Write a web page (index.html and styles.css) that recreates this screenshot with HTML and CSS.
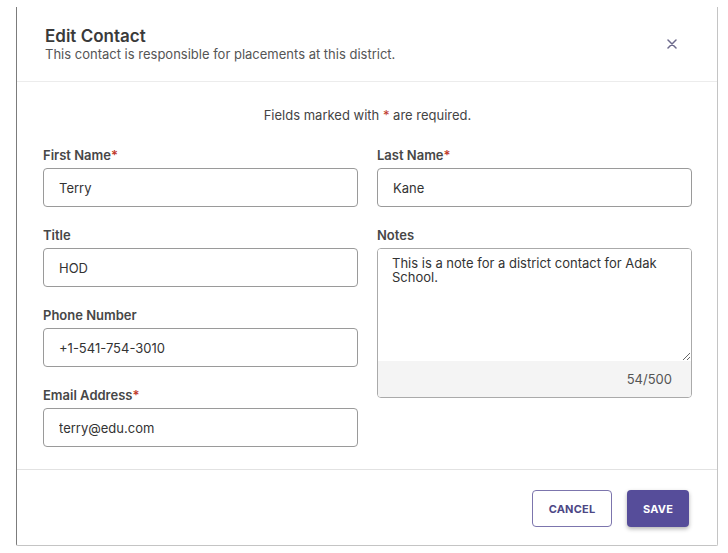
FILE: index.html
```html
<!DOCTYPE html>
<html lang="en">
<head>
<meta charset="utf-8">
<title>Edit Contact</title>
<link rel="stylesheet" href="styles.css">
</head>
<body>
<div class="modal">
  <header class="modal-header">
    <div class="titles">
      <h1 class="title">Edit Contact</h1>
      <p class="subtitle">This contact is responsible for placements at this district.</p>
    </div>
    <button class="close" aria-label="Close">
      <svg width="10" height="10" viewBox="0 0 10 10"><path d="M1 1L9 9M9 1L1 9" stroke="#6d6a8c" stroke-width="1.5" stroke-linecap="round"/></svg>
    </button>
  </header>
  <section class="modal-body">
    <p class="required-note">Fields marked with <span class="req">*</span> are required.</p>
    <div class="grid">
      <div class="col">
        <div class="field">
          <label class="label">First Name<span class="req">*</span></label>
          <input class="input" type="text" value="Terry">
        </div>
        <div class="field">
          <label class="label">Title</label>
          <input class="input" type="text" value="HOD">
        </div>
        <div class="field">
          <label class="label">Phone Number</label>
          <input class="input" type="text" value="+1-541-754-3010">
        </div>
        <div class="field">
          <label class="label">Email Address<span class="req">*</span></label>
          <input class="input" type="text" value="terry@edu.com">
        </div>
      </div>
      <div class="col">
        <div class="field">
          <label class="label">Last Name<span class="req">*</span></label>
          <input class="input" type="text" value="Kane">
        </div>
        <div class="field">
          <label class="label">Notes</label>
          <div class="notes">
            <textarea class="notes-text">This is a note for a district contact for Adak School.</textarea>
            <div class="counter">54/500</div>
          </div>
        </div>
      </div>
    </div>
  </section>
  <footer class="modal-footer">
    <button class="btn btn-outline">CANCEL</button>
    <button class="btn btn-primary">SAVE</button>
  </footer>
</div>
</body>
</html>
```

FILE: styles.css
```css
* { box-sizing: border-box; }
html, body { margin: 0; padding: 0; background: #ffffff; }
body {
  font-family: Inter, "Noto Sans", "Liberation Sans", sans-serif;
  color: #333;
}
.modal {
  margin: 7px 0 0 16px;
  width: 702px;
  height: 539px;
  background: #fff;
  border-left: 1px solid #7c7c7c;
  border-right: 1px solid #c4c4c4;
  border-bottom: 1px solid #c4c4c4;
  border-bottom-left-radius: 2px;
  border-bottom-right-radius: 2px;
  display: flex;
  flex-direction: column;
}
.modal-header {
  display: flex;
  justify-content: space-between;
  align-items: center;
  padding: 19px 28px 19px 28px;
  border-bottom: 1px solid #ececec;
}
.title {
  margin: 0;
  font-size: 17px;
  line-height: 20px;
  font-weight: 600;
  color: #3a3a3a;
}
.subtitle {
  margin: 0;
  font-size: 13px;
  line-height: 16px;
  color: #555;
}
.close {
  background: none;
  border: 0;
  padding: 0;
  margin: 0 12px 0 0;
  width: 10px;
  height: 10px;
  display: flex;
}
.modal-body {
  padding: 24px 25px 21px 26px;
  flex: 1;
}
.required-note {
  margin: 0 0 22px 0;
  text-align: center;
  font-size: 13px;
  line-height: 18px;
  color: #444;
}
.req { color: #c0392b; }
.grid {
  display: grid;
  grid-template-columns: 315px 315px;
  column-gap: 19px;
}
.col {
  display: flex;
  flex-direction: column;
  gap: 19px;
}
.field {
  display: flex;
  flex-direction: column;
}
.label {
  font-size: 13px;
  line-height: 18px;
  font-weight: 600;
  color: #474747;
  margin-bottom: 4px;
}
.input {
  height: 39px;
  border: 1px solid #9a9a9a;
  border-radius: 4px;
  padding: 0 15px;
  font-family: inherit;
  font-size: 13px;
  color: #333;
  background: #fff;
  outline: none;
}
.notes {
  border: 1px solid #aaaaaa;
  border-radius: 4px;
  overflow: hidden;
  display: flex;
  flex-direction: column;
  height: 150px;
}
.notes-text {
  flex: 1;
  border: 0;
  outline: none;
  resize: vertical;
  padding: 7px 14px;
  font-family: inherit;
  font-size: 13px;
  line-height: 14px;
  color: #333;
  background: #fff;
}
.counter {
  height: 36px;
  background: #f4f4f4;
  text-align: right;
  padding-right: 19px;
  line-height: 36px;
  font-size: 13px;
  color: #555;
}
.modal-footer {
  border-top: 1px solid #e2e2e2;
  padding: 20px 28px 18px 28px;
  display: flex;
  justify-content: flex-end;
  gap: 15px;
}
.btn {
  height: 37px;
  border-radius: 4px;
  font-family: inherit;
  font-size: 11px;
  font-weight: 700;
  letter-spacing: 0.2px;
  cursor: pointer;
}
.btn-outline {
  width: 80px;
  background: #fff;
  border: 1px solid #7c75ad;
  color: #4d4785;
}
.btn-primary {
  width: 62px;
  background: #564d9a;
  border: 0;
  color: #fff;
  box-shadow: 0 2px 4px rgba(0,0,0,0.3);
}
```
